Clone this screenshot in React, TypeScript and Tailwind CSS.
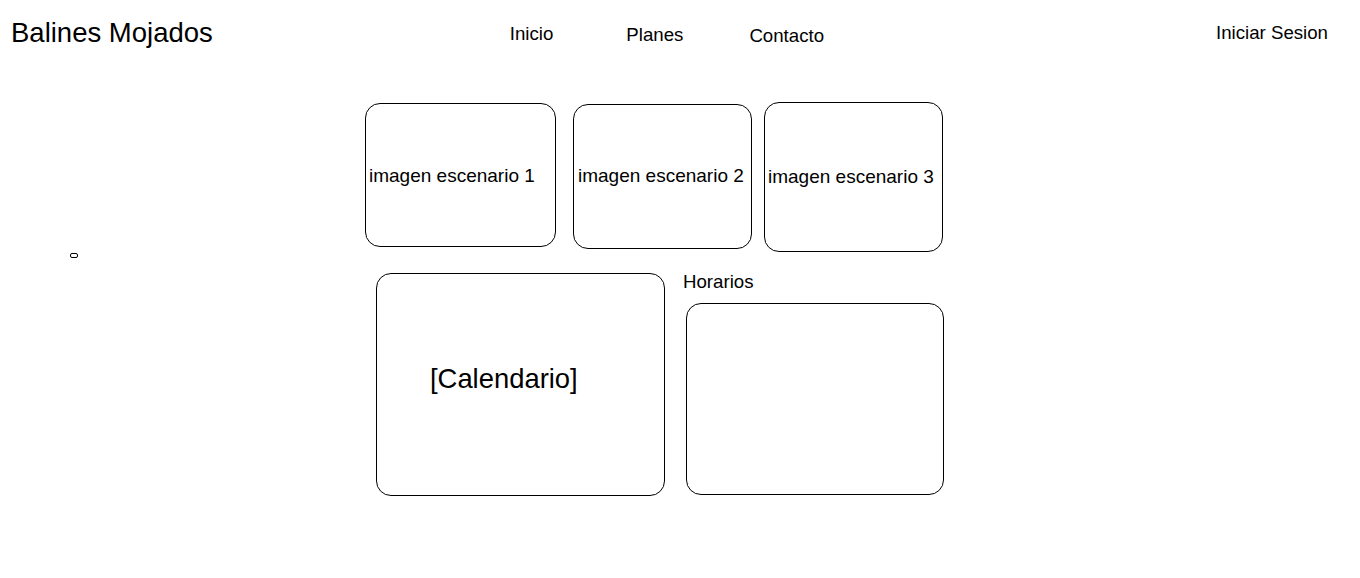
const escenarios = [
  { id: 1, box: "mt-[1px] w-[191px] h-[144px] pl-[3px]" },
  { id: 2, box: "mt-[2px] ml-[17px] w-[179px] h-[145px] pl-[4px] pb-[2px]" },
  { id: 3, box: "mt-0 ml-[12px] w-[179px] h-[150px] pl-[3px] pb-[1px]" },
];

const App = () => {
  return (
    <div className="w-[1360px] h-[578px] bg-white text-black font-['Liberation_Sans',Arial,sans-serif] overflow-hidden">
      {/* header */}
      <header className="flex items-start h-[70px]">
        <h1 className="ml-[11px] mt-[19px] text-[27.5px] leading-none whitespace-nowrap">
          Balines Mojados
        </h1>
        <nav className="flex items-start text-[18.67px] leading-none">
          <a className="ml-[297px] mt-[25px]">Inicio</a>
          <a className="ml-[73px] mt-[26px]">Planes</a>
          <a className="ml-[66px] mt-[27px]">Contacto</a>
        </nav>
        <button className="ml-auto mr-[32px] mt-[24px] text-[18.67px] leading-none whitespace-nowrap">
          Iniciar Sesion
        </button>
      </header>

      <main className="flex mt-[32px]">
        <aside className="w-[365px] shrink-0">
          <div className="ml-[70px] mt-[151px] w-[8px] h-[5px] border border-black rounded-[2px]"></div>
        </aside>

        <section className="flex flex-col">
          <div className="flex items-start">
            {escenarios.map((e) => (
              <div
                key={e.id}
                className={`${e.box} shrink-0 flex items-center border border-black rounded-[15px]`}
              >
                <span className="text-[19px] leading-none whitespace-nowrap">
                  imagen escenario {e.id}
                </span>
              </div>
            ))}
          </div>

          <div className="flex items-start mt-[19px] ml-[11px]">
            <div className="mt-[2px] w-[289px] h-[223px] shrink-0 border border-black rounded-[15px] pt-[91px] pl-[53px]">
              <p className="text-[27.4px] leading-none whitespace-nowrap">[Calendario]</p>
            </div>
            <div className="flex flex-col">
              <p className="ml-[18px] mt-[1px] text-[18.67px] leading-[19px]">Horarios</p>
              <div className="ml-[21px] mt-[12px] w-[258px] h-[192px] border border-black rounded-[15px]"></div>
            </div>
          </div>
        </section>
      </main>
    </div>
  );
};

export default App;
